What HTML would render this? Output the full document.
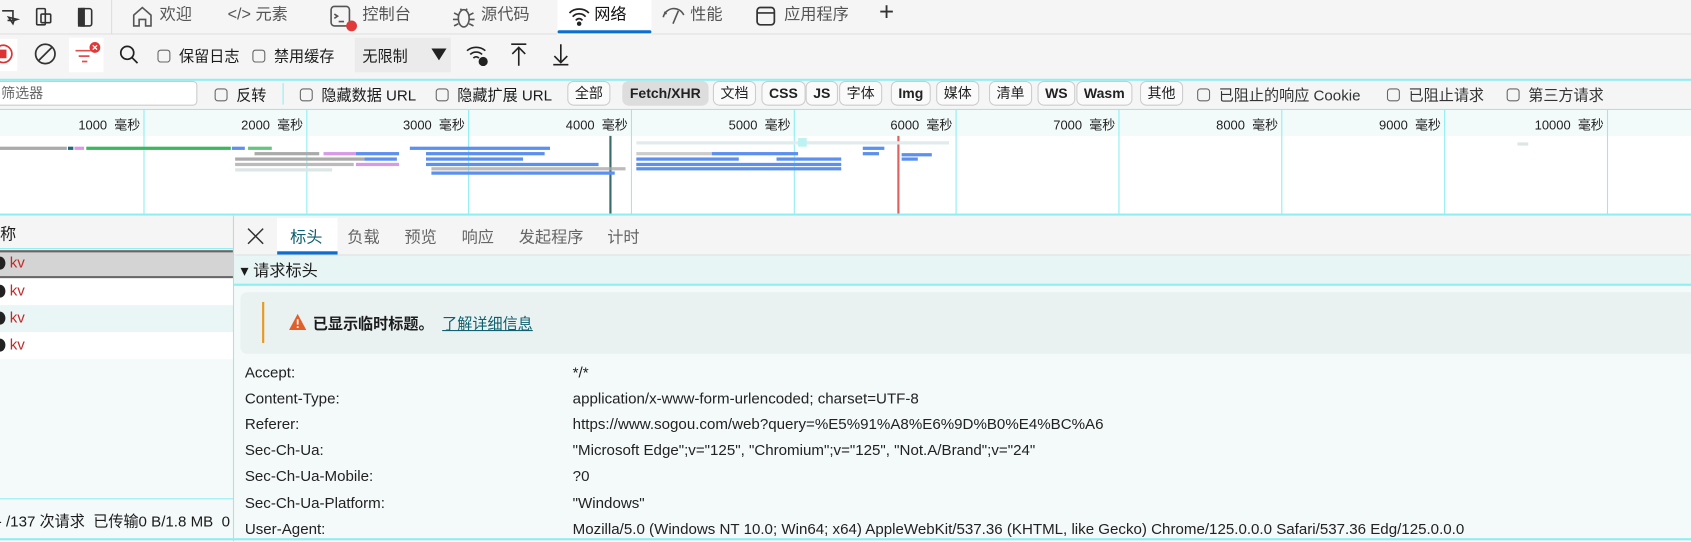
<!DOCTYPE html>
<html><head><meta charset="utf-8"><style>
*{box-sizing:border-box;margin:0;padding:0}
html,body{width:1691px;height:542px;overflow:hidden;background:#f4f9f9}
#w{position:absolute;left:0;top:0;width:1568px;height:502px;transform:scale(1.0785);transform-origin:0 0;overflow:hidden;font-family:"Liberation Sans","Noto Sans CJK SC",sans-serif;font-size:14px;color:#1b1b1b}
.a{position:absolute;white-space:nowrap}
.tab{position:absolute;top:0;height:32px;line-height:28px;font-size:15px;color:#555}
.cb{display:inline-block;width:12px;height:12px;border:1.3px solid #666;border-radius:3px;vertical-align:-1px;margin-right:8px}
.btn{position:absolute;top:75px;height:23px;border:1px solid #ccc;border-radius:6px;background:#fafafa;font-size:13px;line-height:21px;padding:0 6px;font-weight:bold;color:#222}
.vl{position:absolute;top:102px;height:97px;width:1px;background:#8eeef2}
.lb{position:absolute;top:107px;font-size:12px;color:#222;text-align:right;width:100px}
.bar{position:absolute;height:3px}
.hn{position:absolute;left:227px;font-size:14px;color:#222}
.hv{position:absolute;left:531px;font-size:14px;color:#222}
</style></head><body><div id="w">
<div class="a" style="left:0;top:0;width:1568px;height:32px;background:#f5f5f5;border-bottom:1px solid #e0e0e0"></div>
<div class="a" style="left:0;top:32px;width:1568px;height:41px;background:#f5f5f5"></div>
<svg class="a" style="left:0;top:4px" width="100" height="24" viewBox="0 0 100 24" fill="none" stroke="#333" stroke-width="1.5">
<path d="M2 6h10v9h-5"/><path d="M8 12l4 6 1-3 3-1z"/>
<rect x="34" y="4" width="8" height="15" rx="1"/><rect x="38" y="9" width="9" height="8" rx="1"/>
<rect x="73" y="4" width="12" height="16" rx="2"/><rect x="73" y="4" width="5" height="16" fill="#333"/>
</svg>
<div class="a" style="left:103px;top:0;width:1px;height:32px;background:#ddd"></div>
<svg class="a" style="left:121px;top:4px" width="22" height="22" viewBox="0 0 22 22" fill="none" stroke="#555" stroke-width="1.5"><path d="M3 10L11 3l8 7v10h-5v-6h-6v6H3z"/></svg>
<div class="tab" style="left:148px">欢迎</div>
<div class="tab" style="left:211px">&lt;/&gt; 元素</div>
<svg class="a" style="left:305px;top:4px" width="30" height="26" viewBox="0 0 30 26" fill="none" stroke="#555" stroke-width="1.5"><rect x="2" y="2" width="17" height="18" rx="3"/><path d="M5 13l3-2-3-2M9 16h5"/><circle cx="21" cy="20" r="5" fill="#e03a3a" stroke="none"/></svg>
<div class="tab" style="left:336px">控制台</div>
<svg class="a" style="left:419px;top:4px" width="22" height="24" viewBox="0 0 22 24" fill="none" stroke="#555" stroke-width="1.5"><ellipse cx="11" cy="13" rx="5" ry="8"/><path d="M2 8l4 2M20 8l-4 2M1 14h5M21 14h-5M2 20l4-2M20 20l-4-2M8 4l1 2M14 4l-1 2"/></svg>
<div class="tab" style="left:446px">源代码</div>
<div class="a" style="left:517px;top:0;width:87px;height:32px;background:#fff"></div>
<div class="a" style="left:517px;top:28px;width:87px;height:3px;background:#0a6fd1;border-radius:2px"></div>
<svg class="a" style="left:526px;top:6px" width="22" height="18" viewBox="0 0 22 18" fill="none" stroke="#222" stroke-width="1.6"><path d="M2 6a13 13 0 0 1 18 0M5 9.5a8 8 0 0 1 12 0M8 13a3.5 3.5 0 0 1 6 0"/><circle cx="11" cy="16" r="1.3" fill="#222"/></svg>
<div class="tab" style="left:551px;color:#111">网络</div>
<svg class="a" style="left:612px;top:5px" width="26" height="20" viewBox="0 0 26 20" fill="none" stroke="#555" stroke-width="1.5"><path d="M3 11a10 10 0 0 1 19-2M12 17l5-12M4 6l2 2"/></svg>
<div class="tab" style="left:640px">性能</div>
<svg class="a" style="left:699px;top:4px" width="22" height="22" viewBox="0 0 22 22" fill="none" stroke="#333" stroke-width="1.6"><rect x="3" y="3" width="16" height="16" rx="3"/><path d="M3 8h16"/></svg>
<div class="tab" style="left:727px">应用程序</div>
<div class="tab" style="left:815px;font-size:24px;color:#333;top:-2px">+</div>

<div class="a" style="left:0;top:36px;width:16px;height:30px;background:#fff"></div>
<svg class="a" style="left:0;top:39px" width="140" height="24" viewBox="0 0 140 24" fill="none" stroke-width="1.6">
<circle cx="3" cy="11" r="8" stroke="#d33"/><rect x="-1" y="7" width="7" height="8" fill="#d33" stroke="none"/>
<circle cx="42" cy="11" r="9" stroke="#333"/><path d="M36 17l12-12" stroke="#333"/>
</svg>
<div class="a" style="left:64px;top:35px;width:32px;height:32px;background:#fff"></div>
<svg class="a" style="left:68px;top:38px" width="26" height="24" viewBox="0 0 26 24" fill="none" stroke="#e05050" stroke-width="1.6"><path d="M2 9h14M5 14h10M8 19h5"/><circle cx="20" cy="6" r="5" fill="#e03a3a" stroke="none"/><path d="M18 4l4 4M22 4l-4 4" stroke="#fff" stroke-width="1.2"/></svg>
<svg class="a" style="left:109px;top:40px" width="22" height="22" viewBox="0 0 22 22" fill="none" stroke="#222" stroke-width="1.6"><circle cx="9" cy="9" r="6"/><path d="M13.5 13.5l5 5"/></svg>
<div class="a" style="left:146px;top:42px;font-size:14px"><span class="cb"></span>保留日志</div>
<div class="a" style="left:234px;top:42px;font-size:14px"><span class="cb"></span>禁用缓存</div>
<div class="a" style="left:329px;top:35px;width:89px;height:32px;background:#ebebeb"></div>
<div class="a" style="left:336px;top:42px;font-size:14px">无限制</div>
<svg class="a" style="left:400px;top:44px" width="14" height="12"><path d="M0 1h14L7 12z" fill="#222"/></svg>
<svg class="a" style="left:431px;top:40px" width="24" height="24" viewBox="0 0 24 24" fill="none" stroke="#222" stroke-width="1.5"><path d="M2 7a13 13 0 0 1 17 0M5 10.5a8 8 0 0 1 11 0M8 14a3 3 0 0 1 5 0"/><circle cx="17" cy="17" r="3.5" fill="#222"/></svg>
<svg class="a" style="left:471px;top:39px" width="20" height="24" viewBox="0 0 20 24" fill="none" stroke="#222" stroke-width="1.5"><path d="M3 2h14M10 5v17M4 11l6-6 6 6"/></svg>
<svg class="a" style="left:510px;top:39px" width="20" height="24" viewBox="0 0 20 24" fill="none" stroke="#222" stroke-width="1.5"><path d="M3 21h14M10 2v17M4 13l6 6 6-6"/></svg>
<div class="a" style="left:0;top:73px;width:1568px;height:2px;background:#8eeef2"></div>

<div class="a" style="left:0;top:75px;width:1568px;height:27px;background:#f5f5f5"></div>
<div class="a" style="left:-10px;top:75px;width:193px;height:23px;border:1px solid #ccc;border-radius:4px;background:#fff;padding-left:10px;line-height:21px;font-size:13px;color:#666">筛选器</div>
<div class="a" style="left:199px;top:78px;font-size:14px"><span class="cb"></span>反转</div>
<div class="a" style="left:262px;top:77px;width:1px;height:20px;background:#8eeef2"></div>
<div class="a" style="left:278px;top:78px;font-size:14px"><span class="cb"></span>隐藏数据 URL</div>
<div class="a" style="left:404px;top:78px;font-size:14px"><span class="cb"></span>隐藏扩展 URL</div>
<div class="btn" style="left:526px;font-weight:normal">全部</div>
<div class="btn" style="left:577px;background:#ddd;border-color:#ddd">Fetch/XHR</div>
<div class="btn" style="left:661px;font-weight:normal">文档</div>
<div class="btn" style="left:706px">CSS</div>
<div class="btn" style="left:747px">JS</div>
<div class="btn" style="left:778px;font-weight:normal">字体</div>
<div class="btn" style="left:826px">Img</div>
<div class="btn" style="left:868px;font-weight:normal">媒体</div>
<div class="btn" style="left:917px;font-weight:normal">清单</div>
<div class="btn" style="left:962px">WS</div>
<div class="btn" style="left:998px">Wasm</div>
<div class="btn" style="left:1057px;font-weight:normal">其他</div>
<div class="a" style="left:1110px;top:78px;font-size:14px;color:#333"><span class="cb"></span>已阻止的响应 Cookie</div>
<div class="a" style="left:1286px;top:78px;font-size:14px;color:#333"><span class="cb"></span>已阻止请求</div>
<div class="a" style="left:1397px;top:78px;font-size:14px;color:#333"><span class="cb"></span>第三方请求</div>
<div class="a" style="left:0;top:101px;width:1568px;height:1px;background:#8eeef2"></div>

<div class="a" style="left:0;top:102px;width:1568px;height:24px;background:#f3fafa"></div>
<div class="a" style="left:0;top:126px;width:1568px;height:72px;background:#fff"></div>
<div class="vl" style="left:133px"></div><div class="vl" style="left:284px"></div><div class="vl" style="left:434px"></div><div class="vl" style="left:585px"></div><div class="vl" style="left:736px"></div><div class="vl" style="left:886px"></div><div class="vl" style="left:1037px"></div><div class="vl" style="left:1188px"></div><div class="vl" style="left:1339px"></div><div class="vl" style="left:1490px"></div>
<div class="lb" style="left:30px">1000&nbsp; 毫秒</div><div class="lb" style="left:181px">2000&nbsp; 毫秒</div><div class="lb" style="left:331px">3000&nbsp; 毫秒</div><div class="lb" style="left:482px">4000&nbsp; 毫秒</div><div class="lb" style="left:633px">5000&nbsp; 毫秒</div><div class="lb" style="left:783px">6000&nbsp; 毫秒</div><div class="lb" style="left:934px">7000&nbsp; 毫秒</div><div class="lb" style="left:1085px">8000&nbsp; 毫秒</div><div class="lb" style="left:1236px">9000&nbsp; 毫秒</div><div class="lb" style="left:1387px">10000&nbsp; 毫秒</div>
<div class="a" style="left:565px;top:126px;width:2px;height:72px;background:#3a6a6a"></div>
<div class="a" style="left:832px;top:126px;width:2px;height:72px;background:#e06060"></div>
<div class="bar" style="left:0;top:136px;width:62px;background:#aaa"></div>
<div class="bar" style="left:63px;top:136px;width:5px;background:#1a6a7a"></div>
<div class="bar" style="left:69px;top:136px;width:9px;background:#d89ae8"></div>
<div class="bar" style="left:80px;top:136px;width:134px;background:#3cb85c"></div>
<div class="bar" style="left:215px;top:136px;width:12px;background:#5b8ff0"></div>
<div class="bar" style="left:230px;top:136px;width:22px;background:#3cb85c;opacity:.8"></div>
<div class="bar" style="left:236px;top:141px;width:60px;background:#aaa"></div>
<div class="bar" style="left:300px;top:141px;width:30px;background:#d89ae8"></div>
<div class="bar" style="left:330px;top:141px;width:40px;background:#5b8ff0"></div>
<div class="bar" style="left:218px;top:146px;width:120px;background:#aaa"></div>
<div class="bar" style="left:338px;top:146px;width:30px;background:#5b8ff0"></div>
<div class="bar" style="left:218px;top:151px;width:110px;background:#bbb"></div>
<div class="bar" style="left:330px;top:151px;width:40px;background:#d89ae8"></div>
<div class="bar" style="left:218px;top:156px;width:90px;background:#dde6e6"></div>
<div class="bar" style="left:380px;top:136px;width:130px;background:#5b8ff0"></div>
<div class="bar" style="left:395px;top:141px;width:110px;background:#5b8ff0"></div>
<div class="bar" style="left:395px;top:146px;width:90px;background:#5b8ff0"></div>
<div class="bar" style="left:395px;top:151px;width:160px;background:#5b8ff0"></div>
<div class="bar" style="left:400px;top:155px;width:180px;background:#aaa;opacity:.8"></div>
<div class="bar" style="left:400px;top:159px;width:170px;background:#5b8ff0"></div>
<div class="bar" style="left:590px;top:131px;width:190px;background:#e2ebeb"></div>
<div class="bar" style="left:590px;top:141px;width:70px;background:#aaa;opacity:.6"></div>
<div class="bar" style="left:660px;top:141px;width:80px;background:#5b8ff0"></div>
<div class="bar" style="left:590px;top:146px;width:95px;background:#5b8ff0"></div>
<div class="bar" style="left:590px;top:151px;width:190px;background:#5b8ff0"></div>
<div class="bar" style="left:590px;top:155px;width:190px;background:#5b8ff0"></div>
<div class="bar" style="left:720px;top:146px;width:60px;background:#5b8ff0"></div>
<div class="bar" style="left:740px;top:128px;width:8px;height:8px;background:#bdf2f2"></div>
<div class="bar" style="left:750px;top:131px;width:130px;background:#e2ebeb"></div>
<div class="bar" style="left:800px;top:136px;width:20px;background:#5b8ff0"></div>
<div class="bar" style="left:800px;top:141px;width:15px;background:#5b8ff0"></div>
<div class="bar" style="left:836px;top:142px;width:28px;background:#5b8ff0"></div>
<div class="bar" style="left:836px;top:146px;width:15px;background:#5b8ff0"></div>
<div class="bar" style="left:1407px;top:132px;width:10px;background:#dde6e6"></div>
<div class="a" style="left:0;top:198px;width:1568px;height:2px;background:#8eeef2"></div>

<div class="a" style="left:0;top:200px;width:216px;height:30px;background:#f5f5f5"></div>
<div class="a" style="left:0;top:206px;font-size:15px">称</div>
<div class="a" style="left:0;top:230px;width:216px;height:1px;background:#8eeef2"></div>
<div class="a" style="left:0;top:232px;width:216px;height:26px;background:#d4d4d4;border-top:2px solid #666;border-bottom:2px solid #666"></div>
<div class="a" style="left:0;top:258px;width:216px;height:25px;background:#fff"></div>
<div class="a" style="left:0;top:283px;width:216px;height:25px;background:#eaf5f5"></div>
<div class="a" style="left:0;top:308px;width:216px;height:25px;background:#fff"></div>
<div class="a" style="left:-5px;top:238px;width:10px;height:12px;border-radius:50%;background:#222"></div><div class="a" style="left:9px;top:235px;color:#c62828;font-size:14px">kv</div>
<div class="a" style="left:-5px;top:264px;width:10px;height:12px;border-radius:50%;background:#222"></div><div class="a" style="left:9px;top:261px;color:#c62828;font-size:14px">kv</div>
<div class="a" style="left:-5px;top:289px;width:10px;height:12px;border-radius:50%;background:#222"></div><div class="a" style="left:9px;top:286px;color:#c62828;font-size:14px">kv</div>
<div class="a" style="left:-5px;top:314px;width:10px;height:12px;border-radius:50%;background:#222"></div><div class="a" style="left:9px;top:311px;color:#c62828;font-size:14px">kv</div>
<div class="a" style="left:0;top:462px;width:216px;height:1px;background:#8eeef2"></div>
<div class="a" style="left:-3px;top:473px;font-size:14px">- /137 次请求&nbsp; 已传输0 B/1.8 MB&nbsp; 0</div>
<div class="a" style="left:216px;top:200px;width:1px;height:302px;background:#8eeef2"></div>
<div class="a" style="left:0;top:499px;width:1568px;height:2px;background:#8eeef2"></div>

<div class="a" style="left:217px;top:200px;width:1351px;height:36px;background:#f5f5f5;box-shadow:0 1px 2px #ccc"></div>
<svg class="a" style="left:229px;top:211px" width="16" height="16" fill="none" stroke="#333" stroke-width="1.4"><path d="M1 1l14 14M15 1L1 15"/></svg>
<div class="a" style="left:257px;top:202px;width:56px;height:34px;background:#fff"></div>
<div class="a" style="left:257px;top:233px;width:56px;height:3px;background:#0a6fd1"></div>
<div class="a" style="left:269px;top:209px;font-size:15px;color:#0e5f6f">标头</div>
<div class="a" style="left:322px;top:209px;font-size:15px;color:#666">负载</div>
<div class="a" style="left:375px;top:209px;font-size:15px;color:#666">预览</div>
<div class="a" style="left:428px;top:209px;font-size:15px;color:#666">响应</div>
<div class="a" style="left:481px;top:209px;font-size:15px;color:#666">发起程序</div>
<div class="a" style="left:563px;top:209px;font-size:15px;color:#666">计时</div>
<div class="a" style="left:217px;top:237px;width:1351px;height:26px;background:#e8f5f5"></div>
<div class="a" style="left:223px;top:240px;font-size:15px">▾ 请求标头</div>
<div class="a" style="left:217px;top:263px;width:1351px;height:2px;background:#8eeef2"></div>
<div class="a" style="left:223px;top:271px;width:1345px;height:57px;background:#e9f1f1;border-radius:6px 0 0 6px"></div>
<div class="a" style="left:243px;top:280px;width:2px;height:38px;background:#e89a20"></div>
<svg class="a" style="left:268px;top:291px" width="16" height="15"><path d="M8 0L16 15H0z" fill="#e0602a"/><rect x="7.2" y="5" width="1.6" height="5" fill="#fff"/><rect x="7.2" y="11.5" width="1.6" height="1.6" fill="#fff"/></svg>
<div class="a" style="left:290px;top:290px;font-size:14px;font-weight:bold">已显示临时标题。</div>
<div class="a" style="left:410px;top:290px;font-size:14px;color:#0e5f6f;text-decoration:underline">了解详细信息</div>
<div class="hn" style="top:337px">Accept:</div><div class="hv" style="top:337px">*/*</div>
<div class="hn" style="top:361px">Content-Type:</div><div class="hv" style="top:361px">application/x-www-form-urlencoded; charset=UTF-8</div>
<div class="hn" style="top:385px">Referer:</div><div class="hv" style="top:385px">https://www.sogou.com/web?query=%E5%91%A8%E6%9D%B0%E4%BC%A6</div>
<div class="hn" style="top:409px">Sec-Ch-Ua:</div><div class="hv" style="top:409px">"Microsoft Edge";v="125", "Chromium";v="125", "Not.A/Brand";v="24"</div>
<div class="hn" style="top:433px">Sec-Ch-Ua-Mobile:</div><div class="hv" style="top:433px">?0</div>
<div class="hn" style="top:458px">Sec-Ch-Ua-Platform:</div><div class="hv" style="top:458px">"Windows"</div>
<div class="hn" style="top:482px">User-Agent:</div><div class="hv" style="top:482px">Mozilla/5.0 (Windows NT 10.0; Win64; x64) AppleWebKit/537.36 (KHTML, like Gecko) Chrome/125.0.0.0 Safari/537.36 Edg/125.0.0.0</div>
</div></body></html>
